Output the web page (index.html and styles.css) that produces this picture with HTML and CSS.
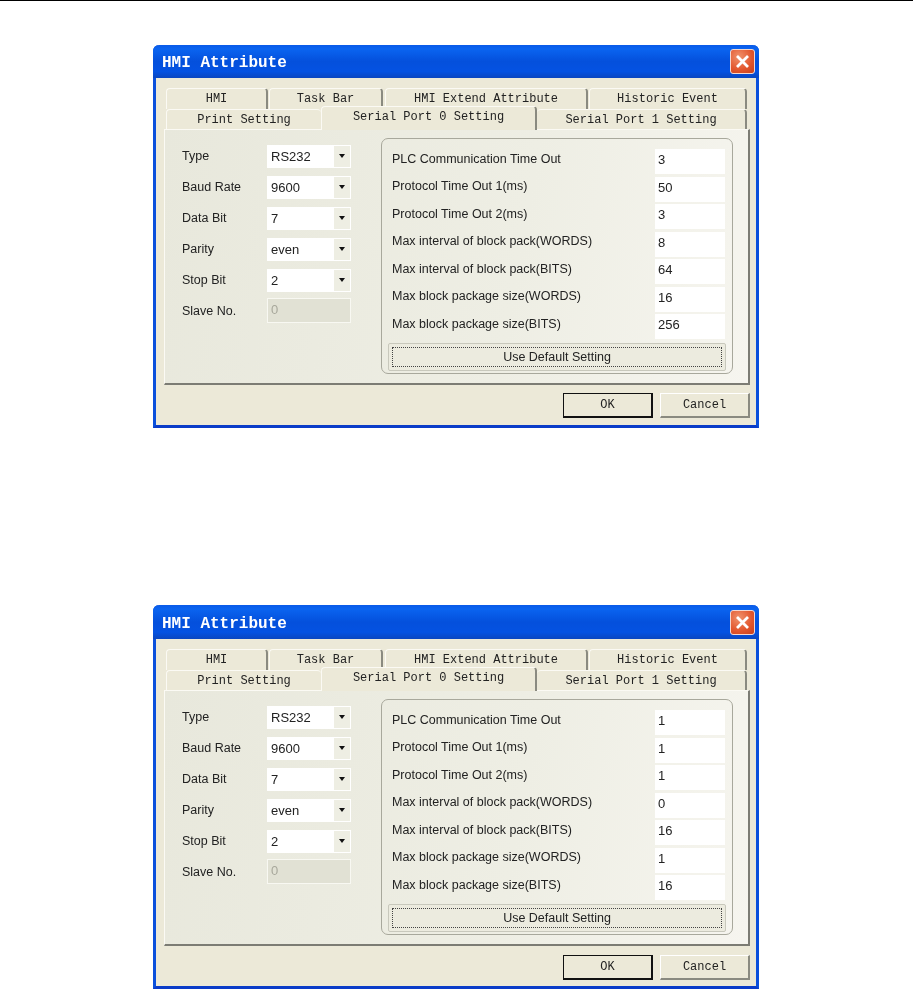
FILE: index.html
```html
<!DOCTYPE html>
<html lang="en">
<head>
  <meta charset="UTF-8" />
  <title>HMI Attribute</title>
  <link rel="stylesheet" href="styles.css">
</head>
<body>

  <div class="dialog">
    <div class="title-bar">
      <span class="title-text">HMI Attribute</span>
      <span class="close-btn">
        <svg width="15" height="15" viewBox="0 0 15 15"><path d="M2 2 L13 13 M13 2 L2 13" stroke="#fff" stroke-width="2.8" fill="none"/></svg>
      </span>
    </div>
    <div class="client">
      <div class="tab-row tab-row-back">
        <span class="tab tab-a">HMI</span>
        <span class="tab tab-b">Task Bar</span>
        <span class="tab tab-c">HMI Extend Attribute</span>
        <span class="tab tab-d">Historic Event</span>
      </div>
      <div class="tab-row tab-row-front">
        <span class="tab tab-e">Print Setting</span>
        <span class="tab tab-active">Serial Port 0 Setting</span>
        <span class="tab tab-f">Serial Port 1 Setting</span>
      </div>
      <div class="panel">
        <div class="left-col">
          <div class="field"><label>Type</label><div class="combo"><span class="combo-val">RS232</span><span class="combo-arrow"></span></div></div>
          <div class="field"><label>Baud Rate</label><div class="combo"><span class="combo-val">9600</span><span class="combo-arrow"></span></div></div>
          <div class="field"><label>Data Bit</label><div class="combo"><span class="combo-val">7</span><span class="combo-arrow"></span></div></div>
          <div class="field"><label>Parity</label><div class="combo"><span class="combo-val">even</span><span class="combo-arrow"></span></div></div>
          <div class="field"><label>Stop Bit</label><div class="combo"><span class="combo-val">2</span><span class="combo-arrow"></span></div></div>
          <div class="field field-slave"><label>Slave No.</label><div class="disabled-input">0</div></div>
        </div>
        <div class="group">
          <div class="row"><span>PLC Communication Time Out</span><div class="num">3</div></div>
          <div class="row"><span>Protocol Time Out 1(ms)</span><div class="num">50</div></div>
          <div class="row"><span>Protocol Time Out 2(ms)</span><div class="num">3</div></div>
          <div class="row"><span>Max interval of block pack(WORDS)</span><div class="num">8</div></div>
          <div class="row"><span>Max interval of block pack(BITS)</span><div class="num">64</div></div>
          <div class="row"><span>Max block package size(WORDS)</span><div class="num">16</div></div>
          <div class="row"><span>Max block package size(BITS)</span><div class="num">256</div></div>
          <div class="default-btn"><span>Use Default Setting</span></div>
        </div>
      </div>
      <div class="actions">
        <span class="btn btn-ok">OK</span>
        <span class="btn">Cancel</span>
      </div>
    </div>
  </div>

  <div class="dialog dialog-second">
    <div class="title-bar">
      <span class="title-text">HMI Attribute</span>
      <span class="close-btn">
        <svg width="15" height="15" viewBox="0 0 15 15"><path d="M2 2 L13 13 M13 2 L2 13" stroke="#fff" stroke-width="2.8" fill="none"/></svg>
      </span>
    </div>
    <div class="client">
      <div class="tab-row tab-row-back">
        <span class="tab tab-a">HMI</span>
        <span class="tab tab-b">Task Bar</span>
        <span class="tab tab-c">HMI Extend Attribute</span>
        <span class="tab tab-d">Historic Event</span>
      </div>
      <div class="tab-row tab-row-front">
        <span class="tab tab-e">Print Setting</span>
        <span class="tab tab-active">Serial Port 0 Setting</span>
        <span class="tab tab-f">Serial Port 1 Setting</span>
      </div>
      <div class="panel">
        <div class="left-col">
          <div class="field"><label>Type</label><div class="combo"><span class="combo-val">RS232</span><span class="combo-arrow"></span></div></div>
          <div class="field"><label>Baud Rate</label><div class="combo"><span class="combo-val">9600</span><span class="combo-arrow"></span></div></div>
          <div class="field"><label>Data Bit</label><div class="combo"><span class="combo-val">7</span><span class="combo-arrow"></span></div></div>
          <div class="field"><label>Parity</label><div class="combo"><span class="combo-val">even</span><span class="combo-arrow"></span></div></div>
          <div class="field"><label>Stop Bit</label><div class="combo"><span class="combo-val">2</span><span class="combo-arrow"></span></div></div>
          <div class="field field-slave"><label>Slave No.</label><div class="disabled-input">0</div></div>
        </div>
        <div class="group">
          <div class="row"><span>PLC Communication Time Out</span><div class="num">1</div></div>
          <div class="row"><span>Protocol Time Out 1(ms)</span><div class="num">1</div></div>
          <div class="row"><span>Protocol Time Out 2(ms)</span><div class="num">1</div></div>
          <div class="row"><span>Max interval of block pack(WORDS)</span><div class="num">0</div></div>
          <div class="row"><span>Max interval of block pack(BITS)</span><div class="num">16</div></div>
          <div class="row"><span>Max block package size(WORDS)</span><div class="num">1</div></div>
          <div class="row"><span>Max block package size(BITS)</span><div class="num">16</div></div>
          <div class="default-btn"><span>Use Default Setting</span></div>
        </div>
      </div>
      <div class="actions">
        <span class="btn btn-ok">OK</span>
        <span class="btn">Cancel</span>
      </div>
    </div>
  </div>

</body>
</html>
```

FILE: styles.css
```css
body {
  margin: 0;
  background-color: #fff;
  border-top: 1px solid #000;
  font-family: "Liberation Sans", Arial, sans-serif;
  font-size: 12.5px;
  color: #222;
}

.dialog {
  box-sizing: border-box;
  width: 606px;
  height: 383px;
  margin: 44px 0 0 153px;
  display: flex;
  flex-direction: column;
  border: 3px solid #0a50dc;
  border-top: 0;
  border-bottom-color: #0a3cc8;
  border-radius: 6px 6px 0 0;
  background-color: #ece9d8;
  filter: blur(0.35px);
}

.dialog-second {
  height: 384px;
  margin-top: 177px;
}

.dialog-second .title-bar {
  height: 34px;
}

.dialog-second .title-text {
  padding-top: 3px;
}

.dialog-second .actions {
  padding-top: 9px;
}

.title-bar {
  display: flex;
  align-items: center;
  justify-content: space-between;
  flex: none;
  height: 33px;
  margin: 0 -3px;
  padding: 0 4px 0 9px;
  border-radius: 6px 6px 0 0;
  background: linear-gradient(#0a5ae8 0%, #0a64f0 12%, #0450dc 50%, #0452e2 80%, #0a46c0 100%);
}

.title-text {
  padding-top: 2px;
  font-family: "Liberation Mono", monospace;
  font-size: 16px;
  font-weight: bold;
  color: #fff;
}

.close-btn {
  display: flex;
  align-items: center;
  justify-content: center;
  width: 23px;
  height: 23px;
  border: 1px solid #f4d8d0;
  border-radius: 3px;
  background: radial-gradient(circle at 35% 30%, #f0926c, #e2552c 60%, #c8401c);
}

.client {
  flex: 1;
  padding: 10px 6px 0 8px;
}

.tab-row {
  display: flex;
  margin-left: 2px;
  font-family: "Liberation Mono", monospace;
  font-size: 12px;
  color: #222;
}

.tab-row-back {
  height: 21px;
}

.tab-row-front {
  height: 20px;
}

.tab {
  box-sizing: border-box;
  display: flex;
  align-items: center;
  justify-content: center;
  border-top: 1px solid #fbfaf4;
  border-left: 1px solid #fbfaf4;
  border-right: 2px solid #8a8a80;
  border-radius: 4px 4px 0 0;
  background-color: #ece9d8;
}

.tab-a { width: 102px; margin-right: 1px; }
.tab-b { width: 114px; margin-right: 2px; }
.tab-c { width: 203px; margin-right: 1px; }
.tab-d { width: 158px; }
.tab-e { width: 155px; border-right: 0; }
.tab-f { width: 210px; border-left: 0; }

.tab-active {
  position: relative;
  z-index: 1;
  width: 216px;
  height: 24px;
  margin-top: -3px;
  padding-bottom: 3px;
}

.panel {
  box-sizing: border-box;
  display: flex;
  height: 256px;
  border-top: 1px solid #fbfaf4;
  border-left: 1px solid #fbfaf4;
  border-right: 2px solid #7c7c74;
  border-bottom: 2px solid #7c7c74;
  background: linear-gradient(100deg, #e8e8dc 0%, #eeeee4 60%, #f6f5ef 100%);
}

.left-col {
  box-sizing: border-box;
  flex: none;
  width: 216px;
  padding: 15px 0 0 17px;
}

.field {
  display: flex;
  align-items: center;
  height: 23px;
  margin-bottom: 8px;
}

.field label {
  width: 85px;
  margin-bottom: 2px;
}

.field-slave {
  height: 25px;
  margin-top: -2px;
}

.field-slave label {
  margin-bottom: 0;
}

.combo {
  box-sizing: border-box;
  display: flex;
  width: 84px;
  height: 23px;
  border: 1px solid #fff;
  background-color: #fff;
}

.combo-val {
  flex: 1;
  padding: 3px 0 0 3px;
  font-size: 13px;
}

.combo-arrow {
  position: relative;
  width: 16px;
  background-color: #eeeee3;
}

/* small black triangle inside the drop button */
.combo-arrow::after {
  content: "";
  position: absolute;
  left: 5px;
  top: 8px;
  border-left: 3px solid transparent;
  border-right: 3px solid transparent;
  border-top: 4px solid #111;
}

.disabled-input {
  box-sizing: border-box;
  width: 84px;
  height: 25px;
  padding: 3px 0 0 3px;
  border: 1px solid #f8f8f2;
  background-color: #e1e1d4;
  color: #a8a89c;
  font-size: 13px;
}

.group {
  box-sizing: border-box;
  width: 352px;
  height: 236px;
  margin-top: 8px;
  padding: 9px 6px 0;
  border: 1px solid #a8a89c;
  border-radius: 7px;
}

.row {
  display: flex;
  align-items: center;
  justify-content: space-between;
  height: 27.5px;
  padding: 0 1px 0 4px;
}

.row span {
  margin-bottom: 6px;
}

.num {
  box-sizing: border-box;
  width: 70px;
  height: 25px;
  padding: 3px 0 0 3px;
  background-color: #fff;
  font-size: 13px;
}

.default-btn {
  box-sizing: border-box;
  height: 28px;
  margin-top: 2px;
  padding: 3px;
  border: 1px solid #c8c8bc;
  border-radius: 2px;
  background-color: #ecebdf;
}

.default-btn span {
  box-sizing: border-box;
  display: flex;
  align-items: center;
  justify-content: center;
  height: 100%;
  border: 1px dotted #444;
}

.actions {
  display: flex;
  justify-content: flex-end;
  gap: 7px;
  padding-top: 8px;
}

.btn {
  box-sizing: border-box;
  display: flex;
  align-items: center;
  justify-content: center;
  width: 90px;
  height: 25px;
  border-top: 1px solid #fff;
  border-left: 1px solid #fff;
  border-right: 2px solid #8a8a80;
  border-bottom: 2px solid #8a8a80;
  background-color: #ece9d8;
  font-family: "Liberation Mono", monospace;
  font-size: 12px;
}

.btn-ok {
  border: 1px solid #111;
  border-right-width: 2px;
  border-bottom-width: 2px;
}
```
